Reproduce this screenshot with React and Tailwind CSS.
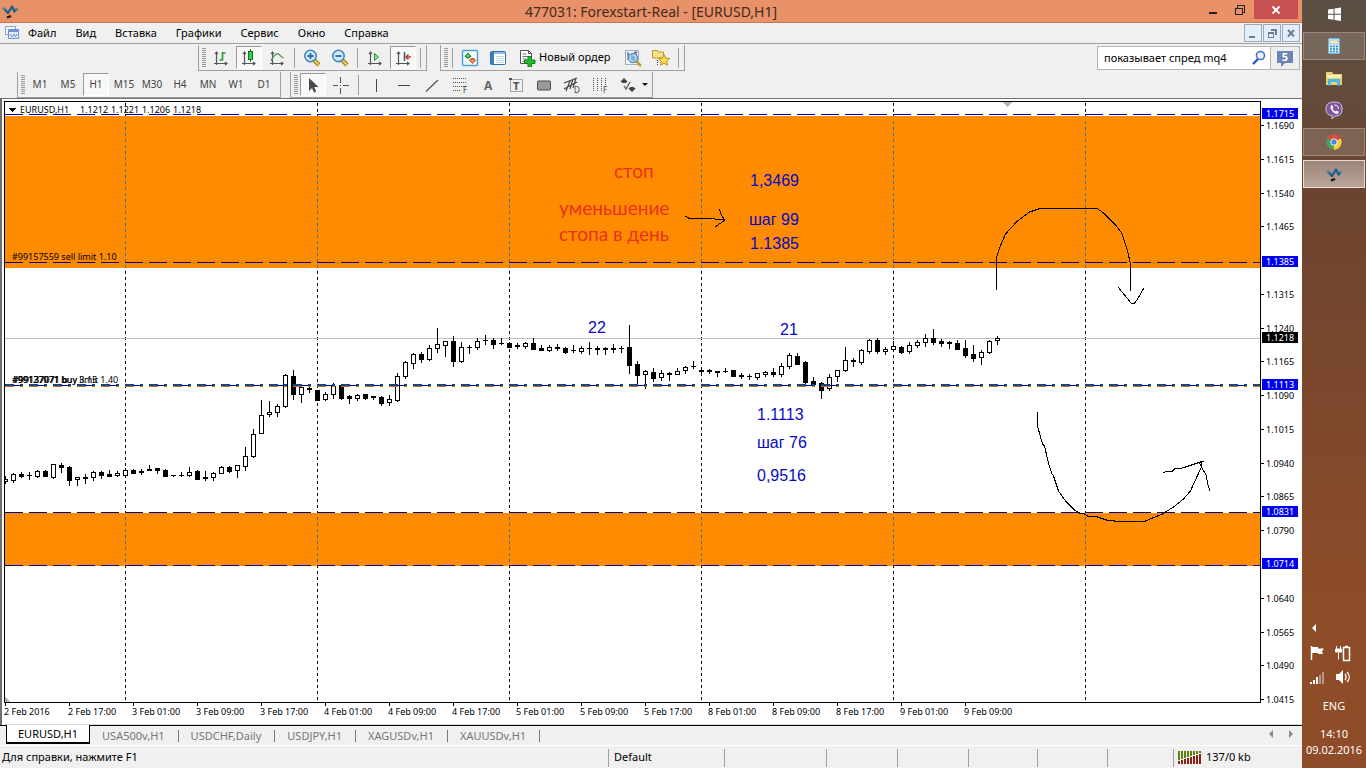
import { useState } from 'react';
import clsx from 'clsx';

const MENU = ['Файл', 'Вид', 'Вставка', 'Графики', 'Сервис', 'Окно', 'Справка'];
const PERIODS = ['M1', 'M5', 'H1', 'M15', 'M30', 'H4', 'MN', 'W1', 'D1'];
const TABS = ['EURUSD,H1', 'USA500v,H1', 'USDCHF,Daily', 'USDJPY,H1', 'XAGUSDv,H1', 'XAUUSDv,H1'];

const TIMES = [
  '2 Feb 2016', '2 Feb 17:00', '3 Feb 01:00', '3 Feb 09:00', '3 Feb 17:00', '4 Feb 01:00',
  '4 Feb 09:00', '4 Feb 17:00', '5 Feb 01:00', '5 Feb 09:00', '5 Feb 17:00', '8 Feb 01:00',
  '8 Feb 09:00', '8 Feb 17:00', '9 Feb 01:00', '9 Feb 09:00',
];

const PRICES = [
  1.169, 1.1615, 1.154, 1.1465, 1.1315, 1.124, 1.1165, 1.109, 1.1015,
  1.094, 1.0865, 1.079, 1.064, 1.0565, 1.049, 1.0415,
];

const LEVELS = [1.1715, 1.1385, 1.1113, 1.0831, 1.0714];
const DAYS = [120, 312, 504, 696, 888, 1080];
const OHLC = ['1.1212', '1.1221', '1.1206', '1.1218'];

const priceY = (p) => Math.round(12 + (1.1715 - p) * 4500);

// [high, body top, body bottom, low, rising]
const CANDLES = [
  [476, 479, 481, 483, 1], [473, 474, 480, 482, 1], [472, 474, 476, 477, 0], [472, 475, 475, 479, 0],
  [470, 471, 476, 477, 1], [470, 471, 476, 476, 0], [464, 464, 477, 478, 1], [463, 465, 467, 472, 0],
  [466, 467, 480, 485, 0], [477, 477, 479, 485, 1], [474, 477, 478, 483, 0], [471, 472, 477, 480, 1],
  [471, 472, 475, 478, 0], [470, 474, 476, 476, 0], [471, 473, 475, 476, 1], [468, 470, 475, 476, 1],
  [469, 470, 473, 473, 0], [469, 471, 472, 474, 0], [465, 469, 470, 470, 0], [468, 468, 470, 473, 0],
  [469, 470, 476, 476, 0], [475, 475, 475, 476, 0], [472, 475, 475, 476, 0], [467, 472, 475, 476, 1],
  [470, 471, 479, 479, 0], [471, 477, 478, 480, 0], [472, 473, 477, 480, 1], [466, 467, 473, 473, 1],
  [466, 467, 471, 472, 0], [465, 465, 470, 477, 1], [447, 456, 466, 470, 1], [429, 434, 456, 457, 1],
  [400, 415, 433, 433, 1], [401, 412, 414, 416, 1], [404, 406, 412, 416, 1], [374, 375, 406, 407, 1],
  [370, 376, 394, 399, 0], [385, 387, 394, 402, 1], [384, 388, 389, 392, 0], [390, 390, 400, 400, 0],
  [392, 394, 399, 400, 1], [383, 386, 394, 398, 1], [385, 385, 398, 399, 0], [395, 396, 398, 403, 0],
  [394, 395, 398, 400, 1], [394, 394, 398, 399, 0], [396, 396, 397, 399, 0], [396, 397, 403, 405, 0],
  [395, 399, 402, 405, 1], [373, 376, 400, 401, 1], [361, 362, 376, 378, 1], [353, 354, 363, 368, 1],
  [352, 354, 359, 362, 0], [345, 348, 359, 360, 1], [328, 344, 348, 352, 1], [341, 341, 345, 356, 1],
  [336, 341, 361, 366, 0], [342, 347, 361, 362, 1], [345, 347, 347, 353, 0], [338, 341, 347, 349, 1],
  [335, 340, 340, 344, 0], [338, 340, 344, 348, 0], [338, 343, 343, 344, 0], [342, 343, 347, 347, 0],
  [343, 345, 346, 348, 0], [342, 343, 346, 348, 1], [338, 343, 349, 349, 0], [345, 348, 350, 350, 0],
  [345, 347, 350, 351, 1], [344, 347, 348, 350, 0], [347, 348, 352, 353, 0], [345, 350, 350, 352, 0],
  [346, 348, 351, 353, 1], [342, 348, 348, 354, 0], [346, 348, 349, 354, 0], [347, 348, 349, 354, 0],
  [344, 348, 349, 352, 0], [346, 348, 348, 352, 0], [325, 347, 365, 373, 0], [361, 364, 375, 385, 0],
  [370, 371, 374, 388, 1], [368, 372, 378, 381, 0], [370, 373, 377, 380, 1], [372, 373, 374, 380, 0],
  [368, 371, 374, 374, 1], [366, 367, 370, 373, 1], [361, 366, 366, 368, 0], [369, 370, 371, 373, 0],
  [369, 370, 371, 373, 0], [371, 371, 372, 376, 0], [368, 371, 371, 372, 0], [370, 370, 376, 376, 0],
  [373, 375, 376, 378, 0], [374, 376, 376, 379, 0], [373, 373, 377, 379, 1], [371, 372, 374, 376, 1],
  [368, 372, 374, 376, 0], [363, 366, 374, 376, 1], [353, 355, 366, 368, 1], [353, 356, 364, 364, 0],
  [361, 362, 382, 386, 0], [377, 381, 384, 386, 0], [382, 383, 390, 398, 0], [374, 377, 388, 390, 1],
  [370, 370, 376, 381, 1], [347, 360, 370, 371, 1], [358, 360, 361, 366, 0], [349, 350, 362, 364, 1],
  [339, 340, 351, 353, 1], [338, 340, 351, 353, 0], [347, 349, 351, 354, 1], [341, 346, 349, 351, 1],
  [346, 347, 352, 353, 0], [342, 345, 351, 353, 1], [340, 342, 345, 347, 1], [334, 338, 342, 346, 1],
  [329, 338, 342, 344, 0], [339, 341, 343, 346, 0], [341, 342, 343, 348, 0], [340, 343, 349, 349, 0],
  [340, 348, 355, 357, 0], [345, 354, 358, 361, 0], [350, 352, 357, 364, 1], [340, 341, 352, 353, 1],
  [336, 338, 340, 344, 1],
];

const NOTES = [
  [745, 84, '1,3469'], [744, 123, 'шаг 99'], [745, 147, '1.1385'], [583, 231, '22'], [775, 233, '21'],
  [752, 318, '1.1113'], [752, 346, 'шаг 76'], [752, 379, '0,9516'],
];

/* ---------- icons ---------- */

function Icon({ size = 18, children, ...rest }) {
  return (
    <svg width={size} height={size} viewBox={`0 0 ${size} ${size}`} fill="none" aria-hidden="true" {...rest}>
      {children}
    </svg>
  );
}

function Axes() {
  return (
    <path d="M4.500 3v13M2 14.500h13M3 5l1.500-2L6 5M13 13l2 1.500-2 1.500" stroke="#555" strokeWidth="1.200" />
  );
}

function Logo({ size = 18 }) {
  return (
    <Icon size={size} viewBox="0 0 18 18">
      <path d="M3 6.500l4 4.500 4-6.500 2.500 5L16 7" stroke="#1d5f86" strokeWidth="2.300" strokeLinejoin="round" />
      <path d="M1.500 5.500h3v2.500h-3zM14.500 6h2.500v2h-2.500z" fill="#4f86a8" />
      <path d="M6 15.500l4-1.500" stroke="#111" strokeWidth="2.400" />
    </Icon>
  );
}

const BarsIcon = () => (
  <Icon>
    <Axes />
    <path d="M7.500 11h3M10.500 11.500V3M10.500 4h3" stroke="#23963a" strokeWidth="1.600" />
  </Icon>
);
const CandleIcon = () => (
  <Icon>
    <Axes />
    <path d="M10.500 0v13" stroke="#117a20" />
    <rect x="8.500" y="2.500" width="4" height="8" fill="#2fd04a" stroke="#117a20" />
  </Icon>
);
const LineIcon = () => (
  <Icon>
    <Axes />
    <path d="M3 12c3-6 5-8 7.500-7 1.500 1 2.500 2.500 5 4" stroke="#4f9f5a" strokeWidth="1.400" />
  </Icon>
);
const ZoomIcon = ({ plus }) => (
  <Icon>
    <path d="M11 11l5 5" stroke="#8a6a10" strokeWidth="4" />
    <path d="M11 11l5 5" stroke="#f0cf4a" strokeWidth="2.400" />
    <circle cx="7.500" cy="7" r="5.700" fill="#cfe9fb" stroke="#3b83b8" strokeWidth="1.500" />
    <path d={plus ? 'M4.500 7h6M7.500 4v6' : 'M4.500 7h6'} stroke="#2a6ea8" strokeWidth="1.800" />
  </Icon>
);
const ScrollIcon = () => (
  <Icon>
    <Axes />
    <path d="M8.500 4.500v7l4-3.500z" fill="#8be08f" stroke="#23963a" />
  </Icon>
);
const ShiftIcon = () => (
  <Icon>
    <Axes />
    <path d="M10.500 3v9" stroke="#1d5f9a" strokeWidth="1.500" />
    <path d="M12 8h5M14.500 5.500L12 8l2.500 2.500" stroke="#c2401c" strokeWidth="1.600" />
  </Icon>
);
const IndicatorIcon = () => (
  <Icon>
    <rect x="1.500" y="1.500" width="15" height="15" rx="1" fill="#f2fbff" stroke="#4f9fd6" strokeWidth="1.500" />
    <path d="M7 4l3 3.500H8.500V9h-3V7.500H4z" fill="#4fd35a" stroke="#15852a" />
    <path d="M11.500 14.500l-3-3.500H10V9.500h3V11h1.500z" fill="#f79a5c" stroke="#c9431a" />
  </Icon>
);
const TemplateIcon = () => (
  <Icon>
    <rect x="1.500" y="2.500" width="15" height="13" rx="1" fill="#fff" stroke="#2d6fae" />
    <path d="M2 3h3v12H2z" fill="#3a7fc0" />
    <path d="M5 3h11v2H5z" fill="#8fbde6" />
    <path d="M7 7.500h8M7 9.500h8M7 11.500h8M7 13.500h8" stroke="#c4d3e2" />
  </Icon>
);
const OrderIcon = () => (
  <Icon>
    <path d="M2.500 1.500h8l3 3v10h-11z" fill="#fff" stroke="#555" />
    <path d="M10.500 1.500v3h3" stroke="#555" />
    <path d="M4.500 5h4M4.500 7.500h7M4.500 10h4M4.500 12.500h3" stroke="#777" />
    <path d="M10 7.500h3.500v3.500H17v3.500h-3.500V18H10v-3.500H6.500V11H10z" fill="#22c02e" stroke="#0f7f1a" />
  </Icon>
);
const TesterIcon = () => (
  <Icon>
    <rect x="1.500" y="1.500" width="13" height="14" fill="#f2f5f8" stroke="#9fb0be" />
    <path d="M4 3v8M3 5h2M12 2v6M10 3.500h3" stroke="#44617c" />
    <path d="M12 12l5 5" stroke="#c9a02c" strokeWidth="2.600" />
    <circle cx="9" cy="9" r="4.500" fill="#b9dcf7" stroke="#5b8fc0" strokeWidth="1.300" />
    <path d="M8 6v5M10 7v5" stroke="#4c7fb5" />
  </Icon>
);
const FavIcon = () => (
  <Icon>
    <path d="M.500 1.500h5l1 1.500h5v6H.500z" fill="#f7e38a" stroke="#b99a2c" />
    <path d="M5.500 11v6" stroke="#333" strokeDasharray="1 1" />
    <path d="M12 5.500l1.700 3.600 3.800.500-2.800 2.700.700 3.900-3.400-1.900-3.400 1.900.700-3.900-2.800-2.700 3.800-.500z" fill="#f9dc4e" stroke="#b8901c" />
  </Icon>
);

const CursorIcon = () => (
  <Icon>
    <path d="M5 2v13l3-3 2 4.500 2.200-1L10.200 11H14.500z" fill="#4a4a4a" />
  </Icon>
);
const CrossIcon = () => (
  <Icon shapeRendering="crispEdges">
    <path d="M8.500 1v6M8.500 12v6M1 9.500h5M11 9.500h6M8 9.500h1" stroke="#555" />
  </Icon>
);
const VLineIcon = () => (
  <Icon shapeRendering="crispEdges"><path d="M9.500 3v13" stroke="#444" /></Icon>
);
const HLineIcon = () => (
  <Icon shapeRendering="crispEdges"><path d="M3 9.500h12" stroke="#444" /></Icon>
);
const TrendIcon = () => (
  <Icon><path d="M3 15.500L15 4" stroke="#555" strokeWidth="1.200" /></Icon>
);
const FiboIcon = () => (
  <Icon>
    <path d="M2 2.500h14M2 6.500h14M2 10.500h14M2 14.500h8" stroke="#555" strokeDasharray="1 1" />
    <text x="12" y="17" fontSize="8" fill="#444" fontFamily="Noto Sans">F</text>
  </Icon>
);
const LetterIcon = () => (
  <Icon><text x="5" y="14" fontSize="12" fontWeight="700" fill="#666" fontFamily="Noto Sans">A</text></Icon>
);
const LabelIcon = () => (
  <Icon>
    <rect x="3.500" y="3.500" width="12" height="12" stroke="#555" strokeDasharray="1 1" />
    <path d="M2 2h3v2H2z" fill="#555" />
    <text x="6" y="14" fontSize="11" fontWeight="700" fill="#555" fontFamily="Noto Sans">T</text>
  </Icon>
);
const RectIcon = () => (
  <Icon><rect x="2.500" y="5" width="13" height="9" rx="1" fill="#999" stroke="#4d4d4d" /></Icon>
);
const ChannelIcon = () => (
  <Icon>
    <path d="M1 7l13-5M1 13l13-7M3 15l4-10M7 13l3-10M10 12l3-10" stroke="#444" strokeWidth="1.200" />
    <text x="11" y="17" fontSize="8" fill="#444" fontFamily="Noto Sans">D</text>
  </Icon>
);
const ZonesIcon = () => (
  <Icon>
    <path d="M2.500 2v14M6.500 2v14M10.500 2v14M14.500 2v8" stroke="#555" strokeDasharray="1 1" />
    <text x="12" y="17" fontSize="8" fill="#444" fontFamily="Noto Sans">F</text>
  </Icon>
);
const ArrowsIcon = () => (
  <Icon>
    <path d="M5 2l3.500 3.500L6.500 7h-3L1.500 5.500zM9.500 12.500L13 16l3.500-3.500-2-1.500h-3z" fill="#444" />
    <path d="M5 10l2 3 4-7" stroke="#555" strokeWidth="1.200" />
  </Icon>
);

/* ---------- toolbar pieces ---------- */

function ToolGroup({ children }) {
  return (
    <div className="flex h-[26px] items-center border-b border-l border-r border-b-[#a0a0a0] border-l-[#a0a0a0] border-r-[#a0a0a0] pr-0.5 pl-[3px]">
      <div className="mr-px h-5 w-1 bg-[repeating-linear-gradient(#999_0_1px,#efefef_1px_2px)]" />
      {children}
    </div>
  );
}

function ToolButton({ label, active, children }) {
  return (
    <button
      type="button"
      aria-label={label}
      aria-pressed={active}
      className={clsx(
        'mx-px flex h-[23px] w-[26px] shrink-0 items-center justify-center border',
        active ? 'border-t-[#999] border-l-[#999] border-r-white border-b-white bg-[#f8f8f8]' : 'border-transparent',
      )}
    >
      {children}
    </button>
  );
}

function Sep() {
  return <div className="mx-[3px] h-5 w-px shrink-0 bg-[#a0a0a0]" />;
}

function TitleBar() {
  return (
    <header className="flex h-[23px] shrink-0 items-start border-b border-[#c07a58] bg-[#e99168]">
      <div className="flex w-[102px] items-center pt-0.5 pl-px">
        <Logo />
      </div>
      <h1 className="flex-1 text-center text-[14px] leading-[23px] text-[#3f2b20]">477031: Forexstart-Real - [EURUSD,H1]</h1>
      <div className="flex w-[102px] justify-end pr-1">
        <button type="button" aria-label="Свернуть" className="flex h-5 w-[26px] items-center justify-center">
          <svg width="10" height="10"><path d="M1 7h8v2H1z" fill="#222" /></svg>
        </button>
        <button type="button" aria-label="Восстановить" className="flex h-5 w-7 items-center justify-center">
          <svg width="12" height="12" fill="none" stroke="#222" shapeRendering="crispEdges">
            <path d="M1.500 4.500h7v6h-7zM1 4h8M3.500 3.500v-2h7v7h-2" />
          </svg>
        </button>
        <button type="button" aria-label="Закрыть" className="flex h-[19px] w-11 items-center justify-center bg-[#c75050]">
          <svg width="10" height="10"><path d="M1.500 1.500l7 7M8.500 1.500l-7 7" stroke="#fff" strokeWidth="1.800" /></svg>
        </button>
      </div>
    </header>
  );
}

function MenuBar() {
  return (
    <nav className="flex h-[21px] shrink-0 items-center border-b border-[#a0a0a0] pr-0.5 pl-1">
      <Icon size={16}>
        <path d="M1.500 1.500h10v8h-10z" fill="#f4f9ff" stroke="#7fa3d6" />
        <path d="M4.500 4.500h10v9h-10z" fill="#e3eefc" stroke="#6a93cf" />
        <path d="M5 6h9" stroke="#6a93cf" strokeWidth="2" />
        <path d="M6 9l2 3 2-3 1.500 3L13 9" stroke="#6a93cf" />
      </Icon>
      <div className="ml-2 flex flex-1 gap-[19px]">
        {MENU.map((item) => (
          <button key={item} type="button" className="leading-5">{item}</button>
        ))}
      </div>
      <div className="flex gap-px">
        {['M4 12h6v2H4z', 'M4 8h6v6H4zM5 10v3h4v-3zM7 5h6v6h-2V7H7z', ''].map((d, i) => (
          <button
            key={i}
            type="button"
            aria-label={['Свернуть окно', 'Восстановить окно', 'Закрыть окно'][i]}
            className="h-[18px] w-[18px] border border-[#9aa9b8] bg-[#e2eef9]"
          >
            <svg width="16" height="16" viewBox="0 1 16 16">
              {d ? <path d={d} fill="#6c7f92" fillRule="evenodd" /> : <path d="M5 6l6 6.500M11 6l-6 6.500" stroke="#6c7f92" strokeWidth="2" />}
            </svg>
          </button>
        ))}
      </div>
    </nav>
  );
}

function Toolbars() {
  const [period, setPeriod] = useState('H1');

  return (
    <div className="shrink-0">
      <div className="flex h-[27px] items-end pr-0.5 pl-[198px]">
        <ToolGroup>
          <ToolButton label="Бары"><BarsIcon /></ToolButton>
          <ToolButton label="Японские свечи" active><CandleIcon /></ToolButton>
          <ToolButton label="Линия"><LineIcon /></ToolButton>
          <Sep />
          <ToolButton label="Увеличить"><ZoomIcon plus /></ToolButton>
          <ToolButton label="Уменьшить"><ZoomIcon /></ToolButton>
          <Sep />
          <ToolButton label="Автопрокрутка"><ScrollIcon /></ToolButton>
          <ToolButton label="Сдвиг графика" active><ShiftIcon /></ToolButton>
          <Sep />
        </ToolGroup>
        <div className="w-[13px]" />
        <ToolGroup>
          <Sep />
          <ToolButton label="Индикаторы"><IndicatorIcon /></ToolButton>
          <ToolButton label="Шаблоны"><TemplateIcon /></ToolButton>
          <button type="button" className="mr-2 ml-1.5 flex items-center gap-[3px] whitespace-nowrap">
            <OrderIcon />
            Новый ордер
          </button>
          <ToolButton label="Тестер"><TesterIcon /></ToolButton>
          <ToolButton label="Избранное"><FavIcon /></ToolButton>
          <Sep />
        </ToolGroup>
        <div className="ml-auto flex h-6 self-center border border-[#b4b4b4] bg-white">
          <label htmlFor="search" className="sr-only">Поиск</label>
          <input
            id="search"
            defaultValue="показывает спред mq4"
            className="w-[150px] bg-transparent pl-1.5 leading-5 outline-none"
          />
          <button type="button" aria-label="Найти" className="flex w-[22px] items-center justify-center">
            <Icon size={16}>
              <path d="M7 9l-5 5" stroke="#2f55b8" strokeWidth="2.400" />
              <circle cx="9.500" cy="5.500" r="4" fill="#eaf3ff" stroke="#4a74d0" strokeWidth="1.600" />
            </Icon>
          </button>
          <button type="button" aria-label="Сообщения" className="flex w-[29px] items-start justify-center border-l border-[#b4b4b4] bg-[#efefef] pt-1">
            <span className="relative bg-[#6d84b4] px-[5px] text-[11px] leading-3 font-bold text-white">
              5
              <span className="absolute top-3 left-1 border-t-4 border-r-4 border-t-[#6d84b4] border-r-transparent" />
            </span>
          </button>
        </div>
      </div>
      <div className="flex h-[27px] items-end pl-[17px]">
        <ToolGroup>
          {PERIODS.map((p) => (
            <button
              key={p}
              type="button"
              onClick={() => setPeriod(p)}
              className={clsx(
                'mx-px h-[23px] w-[26px] border text-center text-[10px] text-[#444]',
                p === period ? 'border-t-[#999] border-l-[#999] border-r-white border-b-white bg-[#f8f8f8]' : 'border-transparent',
              )}
            >
              {p}
            </button>
          ))}
        </ToolGroup>
        <div className="w-[9px]" />
        <ToolGroup>
          <ToolButton label="Курсор" active><CursorIcon /></ToolButton>
          <ToolButton label="Перекрестие"><CrossIcon /></ToolButton>
          <Sep />
          <ToolButton label="Вертикальная линия"><VLineIcon /></ToolButton>
          <ToolButton label="Горизонтальная линия"><HLineIcon /></ToolButton>
          <ToolButton label="Трендовая линия"><TrendIcon /></ToolButton>
          <ToolButton label="Линии Фибоначчи"><FiboIcon /></ToolButton>
          <ToolButton label="Текст"><LetterIcon /></ToolButton>
          <ToolButton label="Метка"><LabelIcon /></ToolButton>
          <ToolButton label="Прямоугольник"><RectIcon /></ToolButton>
          <ToolButton label="Канал"><ChannelIcon /></ToolButton>
          <ToolButton label="Временные зоны"><ZonesIcon /></ToolButton>
          <ToolButton label="Стрелки"><ArrowsIcon /></ToolButton>
          <svg width="8" height="6"><path d="M0 1h6l-3 3z" fill="#111" /></svg>
        </ToolGroup>
      </div>
    </div>
  );
}

/* ---------- chart ---------- */

function Plot() {
  return (
    <svg className="block h-full w-full" fill="none" shapeRendering="crispEdges">
      {DAYS.map((x) => (
        <line key={x} x1={x + 0.5} x2={x + 0.5} y1="1" y2="100%" stroke="#000" strokeDasharray="3 3" />
      ))}
      <rect y="14" width="100%" height="152" fill="#ff8c00" />
      <rect y="411" width="100%" height="53" fill="#ff8c00" />
      {DAYS.map((x) => (
        <path key={x} d={`M${x + 0.5} 19V166M${x + 0.5} 415V464`} stroke="#2674b4" strokeDasharray="3 3" />
      ))}
      <line x2="100%" y1="236.5" y2="236.5" stroke="#c0c0c0" />

      {/* candles sit on an 8px step */}
      <g transform="translate(0 -102)">
        {CANDLES.map(([high, top, bottom, low, up], i) => (
          <g key={i}>
            <line x1={i * 8 + 0.5} x2={i * 8 + 0.5} y1={high} y2={low + 1} stroke="#000" />
            {up ? (
              <rect x={i * 8 - 1.5} y={top + 0.5} width="4" height={bottom - top} fill="#fff" stroke="#000" />
            ) : (
              <rect x={i * 8 - 2} y={top} width="5" height={bottom - top + 1} fill="#000" />
            )}
          </g>
        ))}
      </g>

      {[12, 160, 410, 463].map((y) => (
        <line key={y} x2="100%" y1={y + 0.5} y2={y + 0.5} stroke="#000096" strokeDasharray="18 6" />
      ))}
      <line x2="100%" y1="283.5" y2="283.5" stroke="#000096" strokeDasharray="18 6" />
      <line x2="100%" y1="284.5" y2="284.5" stroke="#d0662c" strokeDasharray="9 6 3 6" />
      <line x2="100%" y1="283" y2="283" stroke="#0d4a80" strokeWidth="2" strokeDasharray="9 6 3 6" />

      <path d="M997 0h10l-5 5z" fill="#b4b4b4" />
      <path d="M0 600v-5l5 5z" fill="#b4b4b4" />
      <path d="M3 6h8l-4 4z" fill="#000" />

      {/* freehand arrows */}
      <g stroke="#000">
        <path d="M991.500 188v-32l3-10 6-14 12-13 12-9 12-4h55l7 5 13 13 5 7 3 8 3 10 3 13v27M1113 185l13 16 3 1 3-4 4-7 3-5" />
        <path d="M1032.500 310v14l5 18 2 2 4 17 3 10 2 3 5 15 7 10 9 9 5 3 5 1 3 2h7l12 4 8 1h31l7-3 10-4 11-7 10-8 7-8 3-7 8-17v-6" />
        <path d="M1158.500 371l3-2h6l2-2 8-1 9-3 9-3 3-1M1194 360l3 6 4 7 2 10 2 6" />
        <path d="M680.500 114l3 2h13l13 1 10 1M714 107l3 7 3 4-10 7" />
      </g>

      <g className="fill-[#e8321e] text-[19px]" fontFamily="Lato, Noto Sans, sans-serif">
        <text x="609" y="76">стоп</text>
        <text x="554" y="113">уменьшение</text>
        <text x="554" y="139">стопа в день</text>
      </g>
      <g className="fill-[#0808c4] text-[16px]" fontFamily="Liberation Sans, sans-serif">
        {NOTES.map(([x, y, text]) => (
          <text key={text} x={x} y={y}>{text}</text>
        ))}
      </g>
      <g className="fill-black text-[9px]">
        <text x="15" y="11">EURUSD,H1</text>
        {OHLC.map((v, i) => (
          <text key={v} x={75 + i * 31} y="11">{v}</text>
        ))}
        <text x="7" y="158">#99157559 sell limit 1.10</text>
        <text x="7" y="281">#99127971 buy limit 1.40</text>
        <text x="7" y="281">#99137071 buy 3.15</text>
        <text x="8" y="281">#99137071 b</text>
      </g>
    </svg>
  );
}

function PriceAxis() {
  return (
    <svg className="h-full w-[41px] shrink-0 overflow-visible text-[9px]" shapeRendering="crispEdges">
      {PRICES.map((p) => (
        <g key={p}>
          <path d={`M0 ${priceY(p) + 1.5}h3`} stroke="#000" />
          <text x="5" y={priceY(p) + 5} fill="#000">{p.toFixed(4)}</text>
        </g>
      ))}
      {[...LEVELS, 1.1218].map((p) => (
        <g key={p}>
          <rect x="1" y={priceY(p) - 5} width="36" height="11" fill={p === 1.1218 ? '#000' : '#0000f0'} />
          <text x="5" y={priceY(p) + 4} fill="#fff">{p.toFixed(4)}</text>
        </g>
      ))}
    </svg>
  );
}

function Chart() {
  return (
    <main className="flex min-h-0 flex-1 flex-col border-t border-l-2 border-[#707070] bg-white pt-0.5 pl-0.5">
      <div className="flex min-h-0 flex-1">
        <div className="min-w-0 flex-1 border border-black">
          <Plot />
        </div>
        <PriceAxis />
      </div>
      <div className="h-[22px] shrink-0 border-b border-[#dcdcdc]">
        <svg className="block h-5 w-full text-[9px]" shapeRendering="crispEdges">
          {TIMES.map((t, i) => (
            <g key={t}>
              <path d={`M${i * 64 + 1.5} 0v3`} stroke="#000" />
              <text x={i * 64} y="12">{t}</text>
            </g>
          ))}
        </svg>
      </div>
    </main>
  );
}

function ChartTabs() {
  return (
    <div className="flex h-[21px] shrink-0 items-start border-b border-white">
      <div className="h-full w-1.5 border-t border-black" />
      {TABS.map((tab, i) => (
        <button
          key={tab}
          type="button"
          className={clsx(
            'whitespace-nowrap',
            i === 0
              ? 'h-[19px] border-x border-b-2 border-black bg-white px-[11px] leading-[18px]'
              : 'relative h-full border-t border-black pr-3.5 pl-3 leading-4 text-[#777] after:absolute after:top-1 after:right-0 after:h-3 after:w-px after:bg-[#777]',
          )}
        >
          {tab}
        </button>
      ))}
      <div className="flex h-full flex-1 items-center justify-end gap-3.5 border-t border-black pr-2 pb-1">
        <button type="button" aria-label="Назад"><svg width="6" height="8"><path d="M5 0v8L1 4z" fill="#888" /></svg></button>
        <button type="button" aria-label="Вперёд"><svg width="6" height="8"><path d="M1 0v8l4-4z" fill="#888" /></svg></button>
      </div>
    </div>
  );
}

function StatusBar() {
  return (
    <footer className="flex h-[22px] shrink-0 items-center pt-px">
      <div className="flex-1 pl-0.5">Для справки, нажмите F1</div>
      <div className="flex h-[18px] w-[116px] items-center border-l border-[#a0a0a0] pl-[5px]">Default</div>
      <div className="h-[18px] w-[102px] border-l border-[#a0a0a0]" />
      <div className="h-[18px] w-[71px] border-l border-[#a0a0a0]" />
      <div className="h-[18px] w-[71px] border-l border-[#a0a0a0]" />
      <div className="h-[18px] w-[69px] border-l border-[#a0a0a0]" />
      <div className="h-[18px] w-[70px] border-l border-[#a0a0a0]" />
      <div className="h-[18px] w-[66px] border-l border-[#a0a0a0]" />
      <div className="flex h-[18px] w-[129px] items-center gap-1 border-l border-[#a0a0a0] pl-1">
        <svg width="24" height="13" shapeRendering="crispEdges">
          {[0, 1, 2, 3, 4, 5, 6, 7].map((i) => (
            <g key={i}>
              <rect x={i * 3} y="0" width="2" height={9 - i} fill="#5d8212" />
              <rect x={i * 3} y={10 - i} width="2" height={3 + i} fill="#8e2212" />
            </g>
          ))}
        </svg>
        137/0 kb
      </div>
    </footer>
  );
}

/* ---------- taskbar ---------- */

const APPS = [
  {
    name: 'Пуск',
    icon: <path d="M3 4.500l5.500-.800v5H3zM9.500 3.500L16 2.500v6.200H9.500zM3 9.700h5.500v5L3 13.900zM9.500 9.700H16V16l-6.500-1z" fill="#fff" />,
  },
  {
    name: 'Калькулятор',
    frame: 'border-[#9b8877] bg-[#ffffff26]',
    icon: (
      <>
        <rect x="3.500" y="1.500" width="11" height="15" rx="1" fill="#d5eefb" stroke="#69b6e0" />
        <rect x="5" y="3" width="8" height="4" fill="#f8e7b5" stroke="#7cb3d4" strokeWidth=".6" />
        <path d="M5 9.500h8M5 12h8M5 14.500h8" stroke="#2f86b9" strokeWidth="1.500" strokeDasharray="2 1" />
      </>
    ),
  },
  {
    name: 'Проводник',
    icon: (
      <>
        <path d="M1 3h6l1.500 2H17v11H1z" fill="#e9cf72" />
        <path d="M2 6h14v3H2z" fill="#fbf0b4" />
        <path d="M3 10h12v6.500h-3V13H6v3.500H3z" fill="#4db7e6" />
      </>
    ),
  },
  {
    name: 'Viber',
    icon: (
      <>
        <path d="M9 1c6 0 8 2 8 7s-2 7-7 7l-3 3v-3.500C2.500 14 1 12 1 8s2-7 8-7z" fill="#7d569c" stroke="#d8c6e6" />
        <path d="M5.500 5l1.500-1 1.500 2.500-1 1c.500 1.500 1.500 2.500 3 3l1-1L14 11l-1.500 2C9 13 5 8.500 5.500 5z" fill="#fff" />
        <path d="M9.500 4c2.500 0 4 1.500 4 4" stroke="#fff" />
      </>
    ),
  },
  {
    name: 'Chrome',
    frame: 'border-[#a08674] bg-[#ffffff26]',
    icon: (
      <>
        <path d="M9 9L2.500 5A7.500 7.500 0 0 1 15.700 5.500z" fill="#dd4b3e" />
        <path d="M9 9L15.700 5.500A7.500 7.500 0 0 1 8.500 16.500z" fill="#f7cf3d" />
        <path d="M9 9l-.500 7.500A7.500 7.500 0 0 1 2.500 5z" fill="#3fa757" />
        <circle cx="9" cy="9" r="3.500" fill="#fff" />
        <circle cx="9" cy="9" r="2.700" fill="#4a86e8" />
      </>
    ),
  },
  { name: 'MetaTrader', frame: 'border-[#e8dcd4] bg-linear-to-b from-[#9c8478] to-[#b9a59a]' },
];

function Taskbar() {
  return (
    <aside className="flex w-16 shrink-0 flex-col bg-linear-to-b from-[#5b5044] via-[#6b4430] via-25% to-[#8f4c28] to-80% text-white">
      <div className="flex flex-col gap-1 px-px">
        {APPS.map(({ name, frame, icon }) => (
          <button
            key={name}
            type="button"
            aria-label={name}
            className={clsx('flex h-7 items-center justify-center border', frame || 'border-transparent')}
          >
            {icon ? <Icon>{icon}</Icon> : <Logo />}
          </button>
        ))}
      </div>
      <div className="mt-auto flex flex-col pb-2.5">
        <button type="button" aria-label="Показать скрытые значки" className="mb-2 ml-2 h-4 w-4">
          <svg width="10" height="10"><path d="M6 1v8L2 5z" fill="#fff" /></svg>
        </button>
        <div className="ml-0.5 grid w-[52px] grid-cols-2 justify-items-center gap-y-1.5">
          <Icon size={18}>
            <path d="M3.500 2v14" stroke="#fff" strokeWidth="1.500" />
            <path d="M4 3h6v1.500h6l-2 3 1 2.500h-5V9H4z" fill="#fff" />
          </Icon>
          <Icon size={18} stroke="#fff">
            <path d="M9.500 3.500h6v13h-6zM11 2.500h3" strokeWidth="1.500" />
            <path d="M4.500 9v6.500M2.500 2v4M6.500 2v4" />
            <path d="M1.500 5h6v3h-6z" fill="#fff" />
          </Icon>
          <Icon size={18} shapeRendering="crispEdges">
            <path d="M2 14h2v2H2zM5 12h2v4H5zM8 9h2v7H8z" fill="#fff" />
            <path d="M11 7h2v9h-2zM14 4h2v12h-2z" fill="#b39a8c" />
          </Icon>
          <Icon size={18}>
            <path d="M2 6h3l4-4v14l-4-4H2z" fill="#fff" />
            <path d="M11 6c1.500 2 1.500 4 0 6M13 4c3 3 3 7 0 10" stroke="#fff" strokeWidth="1.300" />
          </Icon>
        </div>
        <div className="mt-3 text-center leading-4">ENG</div>
        <div className="mt-3 text-center leading-4">14:10</div>
        <div className="text-center leading-4">09.02.2016</div>
      </div>
    </aside>
  );
}

export default function App() {
  return (
    <div className="flex h-screen overflow-hidden bg-[#f0f0f0] font-['Noto_Sans','Open_Sans',sans-serif] text-[11px] text-black">
      <div className="flex min-w-0 flex-1 flex-col">
        <TitleBar />
        <MenuBar />
        <Toolbars />
        <Chart />
        <ChartTabs />
        <StatusBar />
      </div>
      <Taskbar />
    </div>
  );
}
